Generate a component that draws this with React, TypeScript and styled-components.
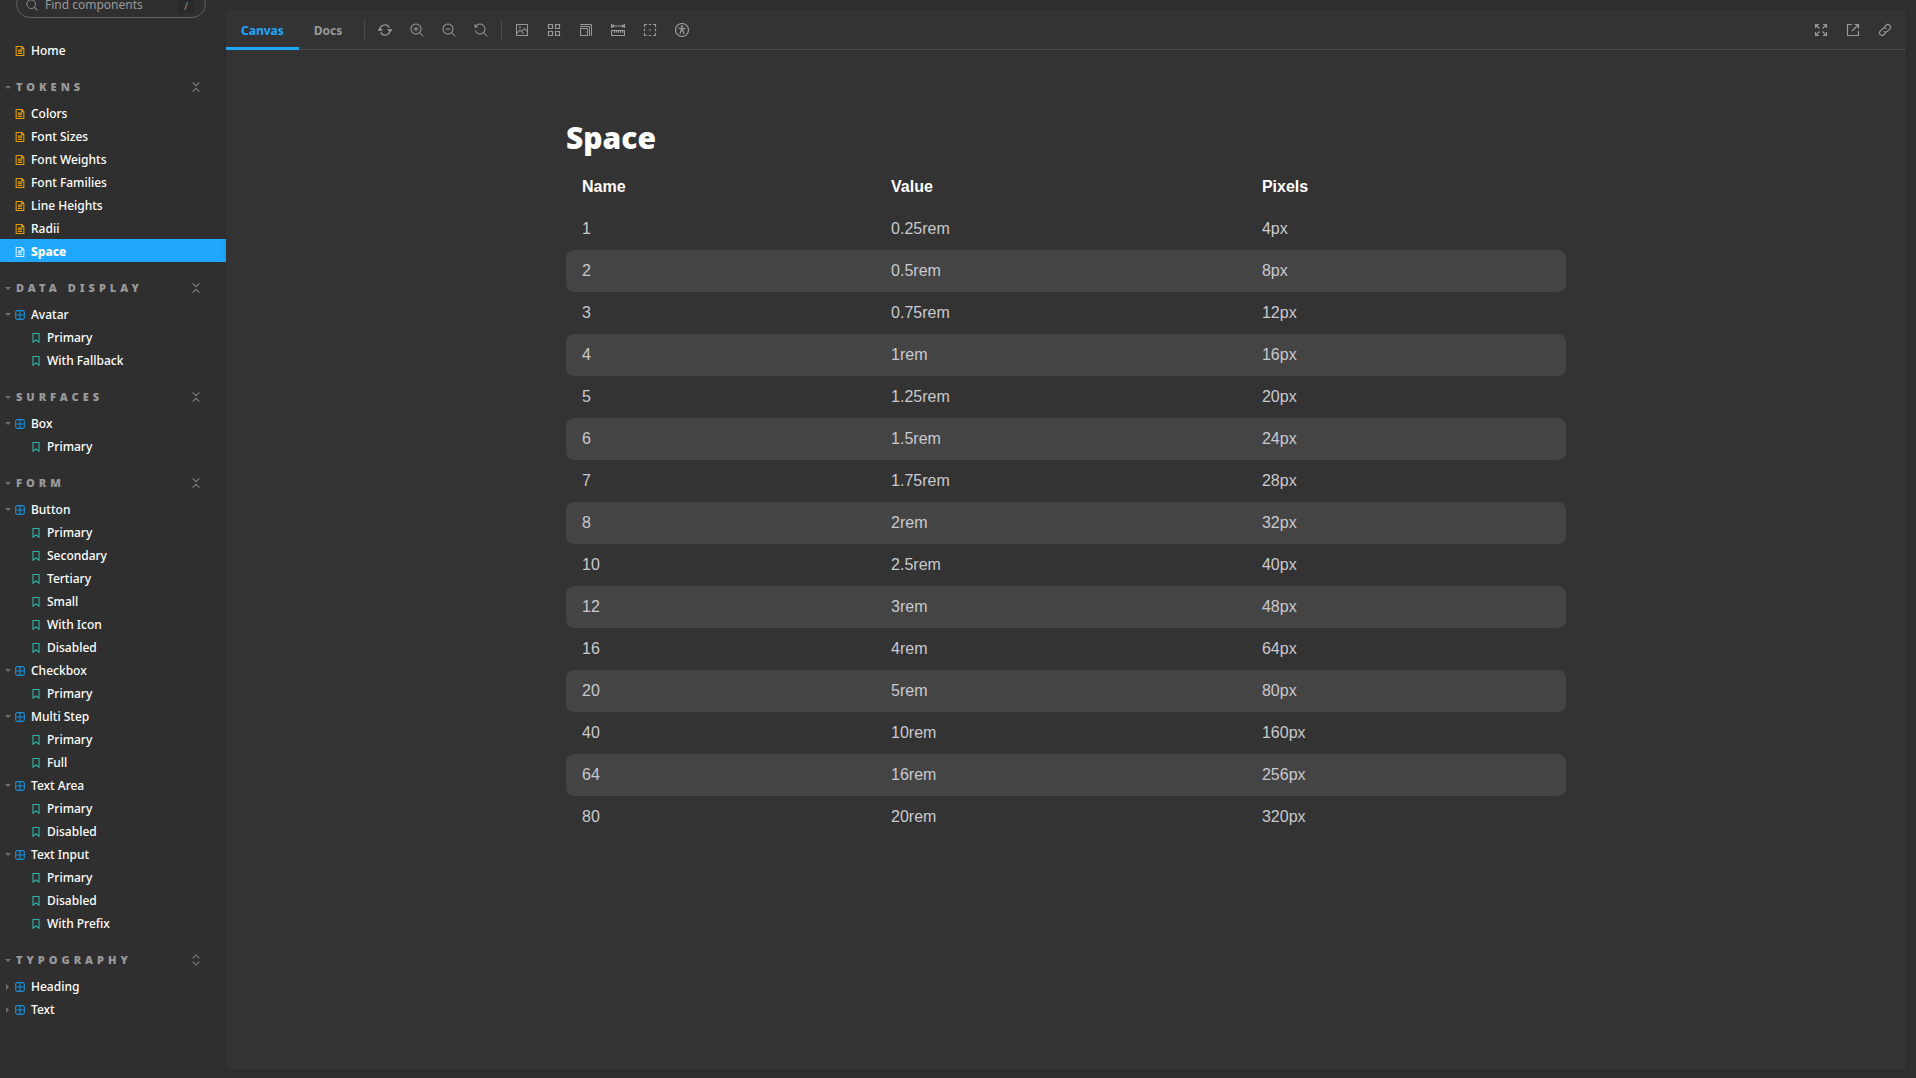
import React from "react";
import styled, { createGlobalStyle } from "styled-components";

const ui = '"Noto Sans", "Open Sans", sans-serif';
const body = '"Liberation Sans", Arial, sans-serif';

const GlobalStyle = createGlobalStyle`
  *, *::before, *::after { box-sizing: border-box; }
  body { margin: 0; background: #2f2f2f; color: #fff; font-family: ${ui}; }
`;

/* ---------- icons ---------- */

const Svg = styled.svg<{ $size: number }>`
  display: block;
  flex: none;
  width: ${(p) => p.$size}px;
  height: ${(p) => p.$size}px;
  fill: currentColor;
`;

const lens =
  "M9.544 10.206a5.5 5.5 0 11.662-.662.5.5 0 01.148.102l3 3a.5.5 0 01-.708.708l-3-3a.5.5 0 01-.102-.148zM10.5 6a4.5 4.5 0 11-9 0 4.5 4.5 0 019 0z";

const filled: Record<string, string> = {
  search: lens,
  zoomIn:
    "M6 3.5a.5.5 0 01.5.5v1.5H8a.5.5 0 010 1H6.5V8a.5.5 0 01-1 0V6.5H4a.5.5 0 010-1h1.5V4a.5.5 0 01.5-.5z" + lens,
  zoomOut: "M4 5.5a.5.5 0 000 1h4a.5.5 0 000-1H4z" + lens,
  zoomReset:
    "M1.5 2.837V1.5a.5.5 0 00-1 0V4a.5.5 0 00.5.5h2.5a.5.5 0 000-1H2.258a4.5 4.5 0 11-.496 4.016.5.5 0 10-.942.337 5.502 5.502 0 008.724 2.353.5.5 0 00.102.148l3 3a.5.5 0 00.708-.708l-3-3a.5.5 0 00-.148-.102A5.5 5.5 0 101.5 2.837z",
  photo:
    "M6.25 4.254a1.25 1.25 0 11-2.5 0 1.25 1.25 0 012.5 0zm-.5 0a.75.75 0 11-1.5 0 .75.75 0 011.5 0zM13 1.504v11a.5.5 0 01-.5.5h-11a.5.5 0 01-.5-.5v-11a.5.5 0 01.5-.5h11a.5.5 0 01.5.5zM2 9.297V2.004h10v5.293L9.854 5.15a.5.5 0 00-.708 0L6.5 7.797 5.354 6.65a.5.5 0 00-.708 0L2 9.297zM9.5 6.21l2.5 2.5v3.293H2V10.71l3-3 3.146 3.146a.5.5 0 00.708-.707L7.207 8.504 9.5 6.21z",
  grow:
    "M1.5 1.004a.5.5 0 100 1H12v10.5a.5.5 0 001 0v-10.5a1 1 0 00-1-1H1.5zM1 3.504a.5.5 0 01.5-.5H10a1 1 0 011 1v8.5a.5.5 0 01-1 0v-8.5H1.5a.5.5 0 01-.5-.5zM1.5 5.004a.5.5 0 00-.5.5v7a.5.5 0 00.5.5h7a.5.5 0 00.5-.5v-7a.5.5 0 00-.5-.5h-7zm.5 1v6h6v-6H2z",
};

const stroked: Record<string, string> = {
  sync: "M2 6.4a5 5 0 019.4-1.8M12 7.6a5 5 0 01-9.4 1.8M.4 7.2L2 5.4l1.6 1.8zM13.6 6.8L12 8.6l-1.6-1.8z",
  grid: "M1.5 1.5h4v4h-4zM8.5 1.5h4v4h-4zM1.5 8.5h4v4h-4zM8.5 8.5h4v4h-4z",
  ruler: "M.5 1v4M13.5 1v4M1 3h12M2.8 1.6L1.4 3l1.4 1.4M11.2 1.6L12.6 3l-1.4 1.4M.5 7.5h13v5H.5zM3.5 8v2M5.5 8v1.5M7.5 8v2M9.5 8v1.5M11.5 8v2",
  outline:
    "M1.5 4V1.5H4M10 1.5h2.5V4M12.5 10v2.5H10M4 12.5H1.5V10M5.8 1.5h2.4M5.8 12.5h2.4M1.5 5.8v2.4M12.5 5.8v2.4M6.3 7h1.4M7 6.3v1.4",
  accessibility:
    "M13.5 7a6.5 6.5 0 11-13 0 6.5 6.5 0 0113 0zM3.6 5.1L6 5.7v2L4.9 11M10.4 5.1L8 5.7v2L9.1 11M6 5.7h2M6 7.8h2M7.7 3.5a.7.7 0 11-1.4 0 .7.7 0 011.4 0z",
  expand:
    "M1.5 5V1.5H5M1.5 1.5l4 4M9 1.5h3.5V5M12.5 1.5l-4 4M12.5 9v3.5H9M12.5 12.5l-4-4M5 12.5H1.5V9M1.5 12.5l4-4",
  share: "M6 1.5H1.5v11h11V8M8.5 1.5h4v4M12.5 1.5L6 8",
  link: "M6.2 4.2l2-2a2.55 2.55 0 013.6 3.6L9.3 8.3a2.55 2.55 0 01-3.6 0M7.8 9.8l-2 2a2.55 2.55 0 01-3.6-3.6l2.5-2.5a2.55 2.55 0 013.6 0",
  collapse: "M3 1.5l4 4 4-4M3 12.5l4-4 4 4",
  unfold: "M3 5l4-4 4 4M3 9l4 4 4-4",
  document: "M1.6.8h8l2.8 2.8v9.6H1.6zM9.4 1v2.8h2.8M4 5.8h6M4 8.1h6M4 10.4h6",
  component: "M3.4.9h7.2a2.5 2.5 0 012.5 2.5v7.2a2.5 2.5 0 01-2.5 2.5H3.4a2.5 2.5 0 01-2.5-2.5V3.4A2.5 2.5 0 013.4.9zM7 1v12M1 7h12",
  story: "M2.8.8h8.4v12.2L7 9.6 2.8 13z",
};

function Icon({ name, size = 14 }: { name: string; size?: number }) {
  return (
    <Svg $size={size} viewBox="0 0 14 14" aria-hidden="true">
      {filled[name] ? (
        <path fillRule="evenodd" clipRule="evenodd" d={filled[name]} />
      ) : (
        <path d={stroked[name]} fill="none" stroke="currentColor" strokeWidth={size < 12 ? 1.5 : 1.2} />
      )}
    </Svg>
  );
}

/* ---------- layout ---------- */

const Shell = styled.div`
  display: grid;
  grid-template-columns: 226px 1fr;
  height: 100vh;
  overflow: hidden;
`;

const Sidebar = styled.aside`
  overflow: hidden;
`;

/* The list is scrolled, so the search field is cut by the window's top edge. */
const Scrolled = styled.div`
  margin-top: -10px;
`;

const SearchField = styled.label`
  display: flex;
  align-items: center;
  gap: 7px;
  height: 28px;
  margin: 0 20px 20px 16px;
  padding: 2px 11px 0 9px;
  border: 1px solid #606060;
  border-radius: 28px;
  color: #999;
`;

const SearchInput = styled.input`
  flex: 1;
  min-width: 0;
  padding: 0;
  border: 0;
  outline: 0;
  background: transparent;
  color: #fff;
  font: 12px/20px ${ui};
  &::placeholder { color: #999; opacity: 1; }
`;

const Key = styled.kbd`
  width: 16px;
  height: 16px;
  padding-top: 4px;
  border-radius: 3px;
  background: #292929;
  font: 10px/10px ${ui};
  text-align: center;
`;

const List = styled.ul`
  margin: 0;
  padding: 0;
  list-style: none;
`;

const iconColors = { document: "#e69d00", component: "#1b8fdb", story: "#2fb5ab" };

const Item = styled.a<{ $kind: keyof typeof iconColors; $selected?: boolean }>`
  display: flex;
  align-items: center;
  height: 23px;
  padding-top: 2px;
  padding-left: ${(p) => (p.$kind === "story" ? 20 : 4)}px;
  background: ${(p) => (p.$selected ? "#1ea7fd" : "transparent")};
  color: #fff;
  font-size: 12px;
  font-weight: ${(p) => (p.$selected ? 800 : 500)};
  line-height: 20px;
  text-decoration: none;
  & > svg {
    margin-right: 6px;
    color: ${(p) => (p.$selected ? "#d5efff" : iconColors[p.$kind])};
  }
`;

const Caret = styled.span<{ $state: "open" | "closed" | "none" }>`
  display: flex;
  align-items: center;
  justify-content: center;
  flex: none;
  width: 7px;
  margin-right: 4px;
  &::before {
    content: "";
    display: ${(p) => (p.$state === "none" ? "none" : "block")};
    border: 0 solid transparent;
    ${(p) =>
      p.$state === "closed"
        ? "border-width: 3px 0 3px 3px; border-left-color: #707070;"
        : "border-width: 3px 3px 0; border-top-color: #707070;"}
  }
`;

const SectionHead = styled.h2`
  display: flex;
  align-items: center;
  justify-content: space-between;
  height: 20px;
  margin: 16px 24px 4px 4px;
`;

const SectionToggle = styled.button`
  display: flex;
  align-items: center;
  padding: 0;
  border: 0;
  background: none;
  color: #999;
  font: 900 11px/20px ${ui};
  letter-spacing: 4px;
  text-transform: uppercase;
  ${Caret} { margin-right: 5px; }
`;

const ExpandAll = styled.button`
  display: flex;
  padding: 0;
  border: 0;
  background: none;
  color: #808080;
`;

const Main = styled.main`
  display: flex;
  flex-direction: column;
  min-width: 0;
  margin: 10px 10px 8px 0;
  border-radius: 4px;
  background: #333;
  box-shadow: 0 1px 5px rgba(0, 0, 0, 0.1);
  overflow: hidden;
`;

const Toolbar = styled.div`
  display: flex;
  align-items: stretch;
  flex: none;
  height: 40px;
  padding-right: 7px;
  box-shadow: inset 0 -1px 0 #4b4b4b;
`;

const Tab = styled.button<{ $active?: boolean }>`
  padding: 1px 15px 0;
  border: 0;
  border-top: 3px solid transparent;
  border-bottom: 3px solid ${(p) => (p.$active ? "#1ea7fd" : "transparent")};
  background: none;
  color: ${(p) => (p.$active ? "#1ea7fd" : "#999")};
  font: 700 12px/20px ${ui};
`;

const Tools = styled.div<{ $end?: boolean }>`
  display: flex;
  align-items: center;
  gap: 4px;
  margin-left: ${(p) => (p.$end ? "auto" : "5px")};
`;

const Divider = styled.span`
  flex: none;
  align-self: center;
  width: 1px;
  height: 20px;
  margin: 0 2px;
  background: #4b4b4b;
`;

const Tool = styled.button`
  display: flex;
  align-items: center;
  justify-content: center;
  width: 28px;
  height: 28px;
  padding: 0;
  border: 0;
  background: none;
  color: #999;
`;

const Content = styled.section`
  width: 100%;
  max-width: 1000px;
  margin: 0 auto;
  padding: 64px 0;
`;

const Title = styled.h1`
  margin: 0 0 4px;
  font: 900 30px/48px ${ui};
`;

const Table = styled.table`
  width: 100%;
  border-collapse: separate;
  border-spacing: 0;
  font: 16px/18px ${body};
  color: #c9c9cf;
  th, td {
    padding: 12px 16px;
    text-align: left;
  }
  th { color: #fff; }
  tbody tr:nth-child(even) td { background: #444; }
  td:first-child { border-radius: 8px 0 0 8px; }
  td:last-child { border-radius: 0 8px 8px 0; }
`;

/* ---------- data ---------- */

type Entry = { name: string; stories?: string[]; closed?: boolean };
type SectionData = { title: string; collapsed?: boolean; entries: Entry[] };

const sections: SectionData[] = [
  {
    title: "Tokens",
    entries: ["Colors", "Font Sizes", "Font Weights", "Font Families", "Line Heights", "Radii", "Space"].map(
      (name) => ({ name })
    ),
  },
  { title: "Data Display", entries: [{ name: "Avatar", stories: ["Primary", "With Fallback"] }] },
  { title: "Surfaces", entries: [{ name: "Box", stories: ["Primary"] }] },
  {
    title: "Form",
    entries: [
      { name: "Button", stories: ["Primary", "Secondary", "Tertiary", "Small", "With Icon", "Disabled"] },
      { name: "Checkbox", stories: ["Primary"] },
      { name: "Multi Step", stories: ["Primary", "Full"] },
      { name: "Text Area", stories: ["Primary", "Disabled"] },
      { name: "Text Input", stories: ["Primary", "Disabled", "With Prefix"] },
    ],
  },
  {
    title: "Typography",
    collapsed: true,
    entries: [
      { name: "Heading", stories: [], closed: true },
      { name: "Text", stories: [], closed: true },
    ],
  },
];

const space: [string, number][] = [
  ["1", 0.25], ["2", 0.5], ["3", 0.75], ["4", 1], ["5", 1.25], ["6", 1.5], ["7", 1.75], ["8", 2],
  ["10", 2.5], ["12", 3], ["16", 4], ["20", 5], ["40", 10], ["64", 16], ["80", 20],
];

const zoomTools = [
  ["sync", "Remount component"],
  ["zoomIn", "Zoom in"],
  ["zoomOut", "Zoom out"],
  ["zoomReset", "Reset zoom"],
];
const viewTools = [
  ["photo", "Change background"],
  ["grid", "Apply a grid"],
  ["grow", "Change viewport size"],
  ["ruler", "Enable measure"],
  ["outline", "Apply outlines"],
  ["accessibility", "Vision simulator"],
];
const endTools = [
  ["expand", "Go full screen"],
  ["share", "Open canvas in new tab"],
  ["link", "Copy canvas link"],
];

function ToolButtons({ tools }: { tools: string[][] }) {
  return (
    <>
      {tools.map(([icon, label]) => (
        <Tool key={icon} type="button" aria-label={label}>
          <Icon name={icon} />
        </Tool>
      ))}
    </>
  );
}

function NavEntry({ entry, selected }: { entry: Entry; selected?: boolean }) {
  const kind = entry.stories ? "component" : "document";
  return (
    <li>
      <Item href="#" $kind={kind} $selected={selected} aria-current={selected ? "page" : undefined}>
        <Caret $state={entry.stories ? (entry.closed ? "closed" : "open") : "none"} />
        <Icon name={kind} size={10} />
        {entry.name}
      </Item>
      {entry.stories && entry.stories.length > 0 && (
        <List>
          {entry.stories.map((story) => (
            <li key={story}>
              <Item href="#" $kind="story">
                <Caret $state="none" />
                <Icon name="story" size={10} />
                {story}
              </Item>
            </li>
          ))}
        </List>
      )}
    </li>
  );
}

export default function App() {
  return (
    <>
      <GlobalStyle />
      <Shell>
        <Sidebar>
          <Scrolled>
            <SearchField>
              <Icon name="search" size={12} />
              <SearchInput type="text" placeholder="Find components" aria-label="Find components" />
              <Key>/</Key>
            </SearchField>
            <nav>
              <List>
                <NavEntry entry={{ name: "Home" }} />
              </List>
              {sections.map((section) => (
                <section key={section.title}>
                  <SectionHead>
                    <SectionToggle type="button">
                      <Caret $state="open" />
                      {section.title}
                    </SectionToggle>
                    <ExpandAll type="button" aria-label={section.collapsed ? "Expand all" : "Collapse all"}>
                      <Icon name={section.collapsed ? "unfold" : "collapse"} size={12} />
                    </ExpandAll>
                  </SectionHead>
                  <List>
                    {section.entries.map((entry) => (
                      <NavEntry key={entry.name} entry={entry} selected={entry.name === "Space"} />
                    ))}
                  </List>
                </section>
              ))}
            </nav>
          </Scrolled>
        </Sidebar>
        <Main>
          <Toolbar>
            <Tab type="button" $active>Canvas</Tab>
            <Tab type="button">Docs</Tab>
            <Tools>
              <Divider />
              <ToolButtons tools={zoomTools} />
              <Divider />
              <ToolButtons tools={viewTools} />
            </Tools>
            <Tools $end>
              <ToolButtons tools={endTools} />
            </Tools>
          </Toolbar>
          <Content>
            <Title>Space</Title>
            <Table>
              <thead>
                <tr>
                  <th scope="col">Name</th>
                  <th scope="col">Value</th>
                  <th scope="col">Pixels</th>
                </tr>
              </thead>
              <tbody>
                {space.map(([name, rem]) => (
                  <tr key={name}>
                    <td>{name}</td>
                    <td>{rem}rem</td>
                    <td>{rem * 16}px</td>
                  </tr>
                ))}
              </tbody>
            </Table>
          </Content>
        </Main>
      </Shell>
    </>
  );
}
